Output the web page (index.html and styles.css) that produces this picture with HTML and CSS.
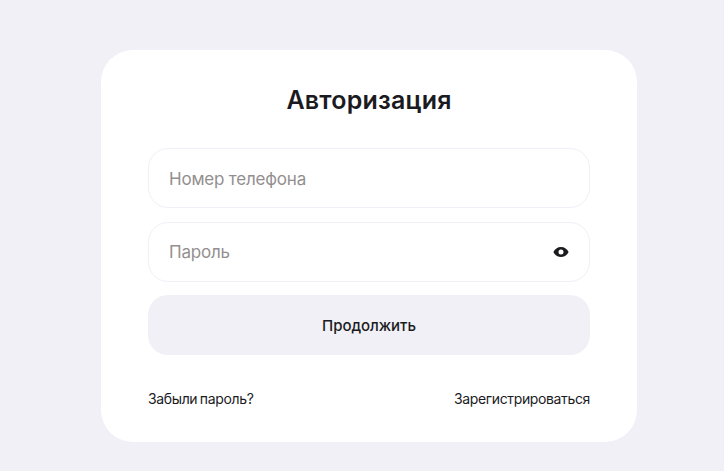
FILE: index.html
```html
<!DOCTYPE html>
<html lang="ru">
<head>
    <meta charset="UTF-8">
    <meta name="viewport" content="width=device-width, initial-scale=1.0">
    <title>Авторизация</title>
    <link rel="stylesheet" href="styles.css">
</head>
<body>
    <div class="card">
        <h2>Авторизация</h2>

        <div class="field">
            <span class="placeholder">Номер телефона</span>
        </div>

        <div class="field">
            <span class="placeholder">Пароль</span>
            <svg class="eye" width="16" height="12" viewBox="0 0 16 12">
                <path fill-rule="evenodd" fill="#1b1b1f" d="M8 1C4.600 1 1.700 3 .4 6c1.300 3 4.200 5 7.600 5s6.300-2 7.600-5C14.300 3 11.400 1 8 1ZM8 8.500a2.500 2.500 0 1 1 0-5 2.500 2.500 0 0 1 0 5Z"/>
            </svg>
        </div>

        <button class="btn-next">Продолжить</button>

        <div class="links">
            <a href="#">Забыли пароль?</a>
            <a href="#">Зарегистрироваться</a>
        </div>
    </div>
</body>
</html>
```

FILE: styles.css
```css
/* Login card on a light grey page */
body {
    margin: 0;
    height: 471px;
    overflow: hidden;
    background-color: #f0f0f6;
    font-family: 'Inter', sans-serif;
    color: #1b1b1f;
}
.card {
    width: 536px;
    height: 392px;
    box-sizing: border-box;
    margin: 50px 0 0 101px;
    padding: 33px 47px 0;
    background-color: #fff;
    border-radius: 32px;
    display: flex;
    flex-direction: column;
}
h2 {
    margin: 0 0 30px;
    height: 35px;
    line-height: 35px;
    font-size: 25px;
    font-weight: 600;
    letter-spacing: 0.2px;
    text-align: center;
}
.field {
    height: 60px;
    box-sizing: border-box;
    margin-bottom: 13.5px;
    padding: 0 20px;
    border: 1px solid #f0f0f6;
    border-radius: 20px;
    display: flex;
    align-items: center;
    justify-content: space-between;
}
.placeholder {
    padding-top: 1px;
    font-size: 17px;
    letter-spacing: -0.2px;
    color: #938f8f;
}
.btn-next {
    height: 60px;
    padding: 1px 0 0;
    border: none;
    border-radius: 20px;
    background-color: #f0f0f6;
    color: #1b1b1f;
    font-family: inherit;
    font-size: 15px;
    font-weight: 500;
    letter-spacing: -0.05px;
    cursor: pointer;
}
.links {
    display: flex;
    justify-content: space-between;
    margin-top: 35px;
    font-size: 14px;
    line-height: 18px;
    letter-spacing: -0.36px;
    word-spacing: -1px;
}
.links a {
    color: #1b1b1f;
    text-decoration: none;
}
```
